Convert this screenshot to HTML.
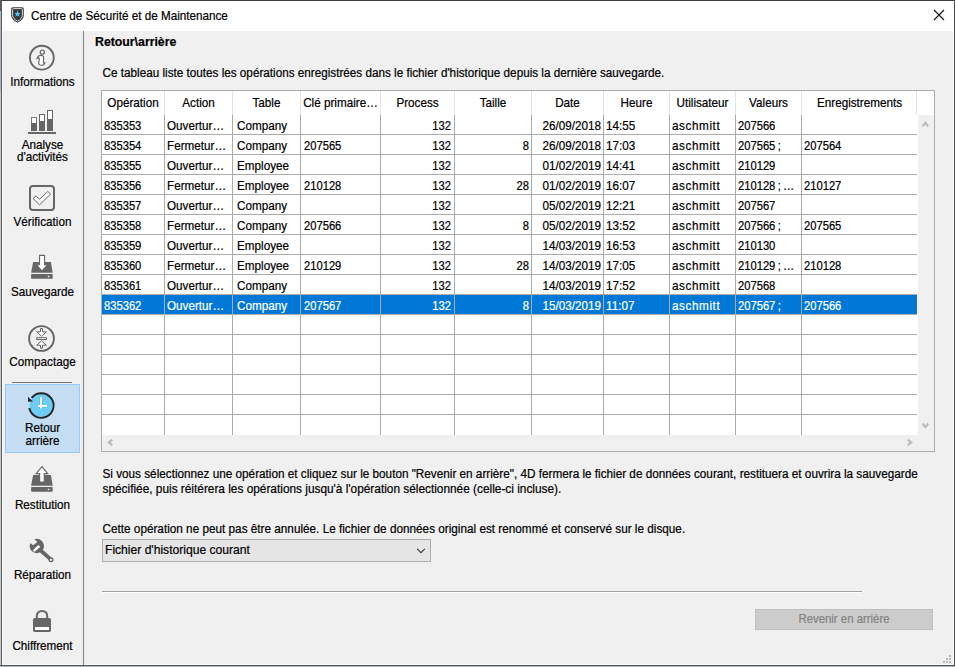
<!DOCTYPE html>
<html><head><meta charset="utf-8"><style>
html,body{margin:0;padding:0;}
body{width:955px;height:667px;position:relative;overflow:hidden;background:#f0f0f0;font-family:"Liberation Sans",sans-serif;}
.t{position:absolute;white-space:pre;-webkit-text-stroke:0.2px currentColor;transform:scaleY(1.08);}
.r{position:absolute;}
svg{position:absolute;}
</style></head><body>
<div class="r" style="left:0px;top:0px;width:1px;height:667px;background:#c3c6cb;"></div>
<div class="r" style="left:0px;top:11px;width:1px;height:80px;background:#a9b6c6;"></div>
<div class="r" style="left:0px;top:0px;width:1px;height:11px;background:#5a5a5a;"></div>
<div class="r" style="left:1px;top:0px;width:954px;height:1px;background:#3f3f3f;"></div>
<div class="r" style="left:1px;top:0px;width:1px;height:666px;background:#5d5d5d;"></div>
<div class="r" style="left:954px;top:0px;width:1px;height:666px;background:#4a4a4a;"></div>
<div class="r" style="left:0px;top:665px;width:955px;height:1px;background:#555;"></div>
<div class="r" style="left:0px;top:666px;width:955px;height:1px;background:#a9b6c6;"></div>
<div class="r" style="left:2px;top:1px;width:952px;height:30px;background:#fff;"></div>
<div class="r" style="left:2px;top:31px;width:1px;height:634px;background:#f9f9f9;"></div>
<div class="r" style="left:953px;top:31px;width:1px;height:634px;background:#fdfdfd;"></div>
<div class="r" style="left:2px;top:664px;width:952px;height:1px;background:#fdfdfd;"></div>
<svg style="left:10px;top:6px" width="16" height="18" viewBox="0 0 16 18">
<path d="M1.2 2.8 Q1.2 1.2 2.8 1.2 L12.2 1.2 Q13.8 1.2 13.8 2.8 L13.8 9.2 C13.8 12.6 11.2 14.8 7.5 16.8 C3.8 14.8 1.2 12.6 1.2 9.2Z" fill="#3a3a3a"/>
<path d="M2.6 3.4 Q2.6 2.6 3.4 2.6 L11.6 2.6 Q12.4 2.6 12.4 3.4 L12.4 9.1 C12.4 11.8 10.4 13.6 7.5 15.2 C4.6 13.6 2.6 11.8 2.6 9.1Z" fill="none" stroke="#e6e6e6" stroke-width="0.9"/>
<path d="M7.5 4.6 L8.4 6.9 L10.8 7 L8.9 8.5 L9.6 10.8 L7.5 9.5 L5.4 10.8 L6.1 8.5 L4.2 7 L6.6 6.9Z" fill="#4fc3f7"/>
</svg>
<div class="t" style="left:31px;top:8.95px;font-size:11.7px;line-height:14px;color:#000;transform-origin:0 11.05px;">Centre de Sécurité et de Maintenance</div>
<svg style="left:933px;top:9px" width="12" height="12" viewBox="0 0 12 12"><path d="M1 1 L11 11 M11 1 L1 11" stroke="#111" stroke-width="1.1"/></svg>
<div class="r" style="left:83px;top:31px;width:1px;height:634px;background:#828282;"></div>
<div class="t" style="left:3px;top:74.95px;font-size:11.7px;line-height:14px;color:#000;transform-origin:0 11.05px;width:79px;text-align:center;">Informations</div>
<div class="t" style="left:3px;top:137.95px;font-size:11.7px;line-height:14px;color:#000;transform-origin:0 11.05px;width:79px;text-align:center;">Analyse</div>
<div class="t" style="left:3px;top:149.95px;font-size:11.7px;line-height:14px;color:#000;transform-origin:0 11.05px;width:79px;text-align:center;">d'activités</div>
<div class="t" style="left:3px;top:214.95px;font-size:11.7px;line-height:14px;color:#000;transform-origin:0 11.05px;width:79px;text-align:center;">Vérification</div>
<div class="t" style="left:3px;top:284.95px;font-size:11.7px;line-height:14px;color:#000;transform-origin:0 11.05px;width:79px;text-align:center;">Sauvegarde</div>
<div class="t" style="left:3px;top:354.95px;font-size:11.7px;line-height:14px;color:#000;transform-origin:0 11.05px;width:79px;text-align:center;">Compactage</div>
<div class="r" style="left:12px;top:382px;width:60px;height:1px;background:#737373;"></div>
<div class="r" style="left:5px;top:384px;width:75px;height:69px;background:#c4ddf2;box-sizing:border-box;border:1px solid #97c9f6;"></div>
<div class="t" style="left:3px;top:420.95px;font-size:11.7px;line-height:14px;color:#000;transform-origin:0 11.05px;width:79px;text-align:center;">Retour</div>
<div class="t" style="left:3px;top:433.95px;font-size:11.7px;line-height:14px;color:#000;transform-origin:0 11.05px;width:79px;text-align:center;">arrière</div>
<div class="t" style="left:3px;top:497.95px;font-size:11.7px;line-height:14px;color:#000;transform-origin:0 11.05px;width:79px;text-align:center;">Restitution</div>
<div class="t" style="left:3px;top:567.95px;font-size:11.7px;line-height:14px;color:#000;transform-origin:0 11.05px;width:79px;text-align:center;">Réparation</div>
<div class="t" style="left:3px;top:638.95px;font-size:11.7px;line-height:14px;color:#000;transform-origin:0 11.05px;width:79px;text-align:center;">Chiffrement</div>
<svg style="left:27px;top:43px" width="30" height="30" viewBox="0 0 30 30">
<circle cx="14.85" cy="14.7" r="11.9" fill="none" stroke="#666" stroke-width="1.9"/>
<circle cx="15.3" cy="9.2" r="2.05" fill="#fff" stroke="#666" stroke-width="1.2"/>
<path d="M10.2 15.2 C11 13.2 12.5 12.3 14 12.4 C15.8 12.5 16.8 13.4 16.6 15.2 L16.4 19.3 C16.4 20.2 17.3 20.3 17.9 19.3 C17.8 21.5 15.8 22.5 13.8 22.3 C12 22.1 11.5 20.8 11.8 19.5 L12.3 15.6 C12.3 14.7 11.3 14.6 10.2 15.2Z" fill="#fff" stroke="#666" stroke-width="1.15"/>
</svg>
<svg style="left:26px;top:108px" width="32" height="28" viewBox="0 0 32 28">
<rect x="2" y="24" width="28" height="2" fill="#666"/>
<rect x="5.5" y="9.5" width="5" height="13" fill="#fff" stroke="#7a7a7a" stroke-width="1"/>
<rect x="5" y="15" width="6" height="8" fill="#666"/>
<rect x="13.5" y="6.5" width="5" height="16" fill="#fff" stroke="#666" stroke-width="1"/>
<rect x="13" y="13" width="6" height="10" fill="#666"/>
<rect x="21.5" y="2.5" width="5" height="20" fill="#fff" stroke="#666" stroke-width="1"/>
<rect x="21" y="11" width="6" height="12" fill="#666"/>
</svg>
<svg style="left:28px;top:184px" width="28" height="28" viewBox="0 0 28 28">
<rect x="2" y="2" width="24" height="24" rx="3" fill="none" stroke="#666" stroke-width="2"/>
<path d="M5 14.5 L8 11.8 L11.5 15.3 L19.8 7.5 L22.5 10.2 L11.5 20.8Z" fill="#fff" stroke="#666" stroke-width="1"/>
</svg>
<svg style="left:27px;top:250px" width="30" height="34" viewBox="0 0 30 34">
<path d="M6.1 12 L23.9 12 L25.7 22.7 L4.1 22.7Z" fill="#666"/>
<rect x="4.1" y="23.9" width="21.6" height="4.9" rx="0.8" fill="#666"/>
<path d="M20.9 25.5 L22.9 26.5 L20.9 27.5Z" fill="#fff"/>
<path d="M12.55 5.35 L17.55 5.35 L17.55 14.8 L20.4 14.8 L15 21.2 L9.6 14.8 L12.55 14.8Z" fill="#fff" stroke="#666" stroke-width="1.1"/>
</svg>
<svg style="left:26px;top:323px" width="32" height="32" viewBox="0 0 32 32">
<circle cx="15.5" cy="15.5" r="12.4" fill="none" stroke="#666" stroke-width="1.9"/>
<rect x="10.8" y="14.7" width="9.6" height="1.8" fill="#fff" stroke="#666" stroke-width="1"/>
<path d="M14.5 5.5 L16.5 5.5 L16.5 8.8 L20.3 8.8 L15.5 13.2 L10.7 8.8 L14.5 8.8Z" fill="#fff" stroke="#666" stroke-width="1"/>
<path d="M14.5 25.2 L16.5 25.2 L16.5 22.2 L20.3 22.2 L15.5 17.9 L10.7 22.2 L14.5 22.2Z" fill="#fff" stroke="#666" stroke-width="1"/>
</svg>
<svg style="left:25px;top:389px" width="34" height="34" viewBox="0 0 34 34">
<circle cx="16.3" cy="16.5" r="11.6" fill="#6dcdf5"/>
<path d="M4.27 19.06 A12.3 12.3 0 1 0 6.61 8.93" fill="none" stroke="#262626" stroke-width="1.9"/>
<path d="M3 7.8 L3 12.7 L8 12.6Z" fill="#262626"/>
<path d="M14.5 7.5 L17.5 7.5 L17.5 15.6 L22.4 15.6 L22.4 18.5 L17.5 18.5 L17.5 20 L14.5 20 L14.5 18.5 L12.6 18.5 L12.6 15.6 L14.5 15.6Z" fill="#55b9ea"/><path d="M15 8 L17 8 L17 16 L22 16 L22 18 L17 18 L17 19.6 L15 19.6 L15 18 L13 18 L13 16 L15 16Z" fill="#fff"/>
</svg>
<svg style="left:27px;top:462px" width="30" height="34" viewBox="0 0 30 34">
<path d="M6.1 13 L23.9 13 L25.7 23.7 L4.1 23.7Z" fill="#666"/>
<rect x="4.1" y="25" width="21.6" height="4.8" rx="0.8" fill="#666"/>
<path d="M20.9 26.5 L22.9 27.4 L20.9 28.3Z" fill="#fff"/>
<path d="M15 4.7 L20.7 11.6 L17.3 11.6 L17.3 20.1 L12.6 20.1 L12.6 11.6 L9.1 11.6Z" fill="#fff" stroke="#666" stroke-width="1.15"/>
</svg>
<svg style="left:26px;top:534px" width="32" height="32" viewBox="0 0 32 32">
<path d="M13 15 L25 25.6" stroke="#666" stroke-width="3.7" stroke-linecap="round"/>
<circle cx="25" cy="25.7" r="2.5" fill="#666"/>
<circle cx="10.8" cy="12" r="7.2" fill="#666"/>
<path d="M6.2 3.1 L11.3 7.9 L7.2 11.3 L2.1 7.4Z" fill="#f0f0f0"/>
<path d="M8.4 16.4 L12.6 12.5" stroke="#fff" stroke-width="2.5" stroke-linecap="round"/>
<circle cx="25" cy="25.8" r="1.1" fill="#fff"/>
</svg>
<svg style="left:31px;top:607px" width="22" height="27" viewBox="0 0 22 27">
<path d="M5.8 11 L5.8 9 C5.8 5.6 8 3.9 11 3.9 C14 3.9 16.2 5.6 16.2 9 L16.2 11" fill="none" stroke="#666" stroke-width="2"/>
<rect x="2" y="11" width="18" height="14" rx="1.8" fill="#666"/>
<rect x="4" y="20" width="14" height="3" fill="#fff"/>
</svg>
<div class="t" style="left:95px;top:34.74px;font-size:12.3px;line-height:14px;color:#000;transform-origin:0 11.26px;font-weight:bold;">Retour\arrière</div>
<div class="t" style="left:102.6px;top:65.94px;font-size:11.71px;line-height:14px;color:#000;transform-origin:0 11.06px;">Ce tableau liste toutes les opérations enregistrées dans le fichier d'historique depuis la dernière sauvegarde.</div>
<div class="r" style="left:101px;top:90px;width:834px;height:362px;background:#fff;box-sizing:border-box;border:1px solid #a9abb0;"></div>
<div class="t" style="left:102px;top:95.95px;font-size:11.7px;line-height:14px;color:#000;transform-origin:0 11.05px;width:62px;text-align:center;">Opération</div>
<div class="r" style="left:164px;top:91px;width:1px;height:24px;background:#e5e5e5;"></div>
<div class="t" style="left:165px;top:95.95px;font-size:11.7px;line-height:14px;color:#000;transform-origin:0 11.05px;width:67px;text-align:center;">Action</div>
<div class="r" style="left:232px;top:91px;width:1px;height:24px;background:#e5e5e5;"></div>
<div class="t" style="left:233px;top:95.95px;font-size:11.7px;line-height:14px;color:#000;transform-origin:0 11.05px;width:67px;text-align:center;">Table</div>
<div class="r" style="left:300px;top:91px;width:1px;height:24px;background:#e5e5e5;"></div>
<div class="t" style="left:301px;top:95.95px;font-size:11.7px;line-height:14px;color:#000;transform-origin:0 11.05px;width:79px;text-align:center;">Clé primaire…</div>
<div class="r" style="left:380px;top:91px;width:1px;height:24px;background:#e5e5e5;"></div>
<div class="t" style="left:381px;top:95.95px;font-size:11.7px;line-height:14px;color:#000;transform-origin:0 11.05px;width:73px;text-align:center;">Process</div>
<div class="r" style="left:454px;top:91px;width:1px;height:24px;background:#e5e5e5;"></div>
<div class="t" style="left:455px;top:95.95px;font-size:11.7px;line-height:14px;color:#000;transform-origin:0 11.05px;width:76px;text-align:center;">Taille</div>
<div class="r" style="left:531px;top:91px;width:1px;height:24px;background:#e5e5e5;"></div>
<div class="t" style="left:532px;top:95.95px;font-size:11.7px;line-height:14px;color:#000;transform-origin:0 11.05px;width:71px;text-align:center;">Date</div>
<div class="r" style="left:603px;top:91px;width:1px;height:24px;background:#e5e5e5;"></div>
<div class="t" style="left:604px;top:95.95px;font-size:11.7px;line-height:14px;color:#000;transform-origin:0 11.05px;width:65px;text-align:center;">Heure</div>
<div class="r" style="left:669px;top:91px;width:1px;height:24px;background:#e5e5e5;"></div>
<div class="t" style="left:670px;top:95.95px;font-size:11.7px;line-height:14px;color:#000;transform-origin:0 11.05px;width:65px;text-align:center;">Utilisateur</div>
<div class="r" style="left:735px;top:91px;width:1px;height:24px;background:#e5e5e5;"></div>
<div class="t" style="left:736px;top:95.95px;font-size:11.7px;line-height:14px;color:#000;transform-origin:0 11.05px;width:65px;text-align:center;">Valeurs</div>
<div class="r" style="left:801px;top:91px;width:1px;height:24px;background:#e5e5e5;"></div>
<div class="t" style="left:802px;top:95.95px;font-size:11.7px;line-height:14px;color:#000;transform-origin:0 11.05px;width:115px;text-align:center;">Enregistrements</div>
<div class="r" style="left:916px;top:91px;width:1px;height:24px;background:#e5e5e5;"></div>
<div class="r" style="left:918px;top:115px;width:16px;height:336px;background:#f0f0f0;"></div>
<div class="r" style="left:102px;top:435px;width:816px;height:16px;background:#f0f0f0;"></div>
<div class="r" style="left:102px;top:134px;width:815px;height:1px;background:#ababab;"></div>
<div class="r" style="left:102px;top:154px;width:815px;height:1px;background:#ababab;"></div>
<div class="r" style="left:102px;top:174px;width:815px;height:1px;background:#ababab;"></div>
<div class="r" style="left:102px;top:194px;width:815px;height:1px;background:#ababab;"></div>
<div class="r" style="left:102px;top:214px;width:815px;height:1px;background:#ababab;"></div>
<div class="r" style="left:102px;top:234px;width:815px;height:1px;background:#ababab;"></div>
<div class="r" style="left:102px;top:254px;width:815px;height:1px;background:#ababab;"></div>
<div class="r" style="left:102px;top:274px;width:815px;height:1px;background:#ababab;"></div>
<div class="r" style="left:102px;top:294px;width:815px;height:1px;background:#ababab;"></div>
<div class="r" style="left:102px;top:314px;width:815px;height:1px;background:#ababab;"></div>
<div class="r" style="left:102px;top:334px;width:815px;height:1px;background:#ababab;"></div>
<div class="r" style="left:102px;top:354px;width:815px;height:1px;background:#ababab;"></div>
<div class="r" style="left:102px;top:374px;width:815px;height:1px;background:#ababab;"></div>
<div class="r" style="left:102px;top:394px;width:815px;height:1px;background:#ababab;"></div>
<div class="r" style="left:102px;top:414px;width:815px;height:1px;background:#ababab;"></div>
<div class="r" style="left:164px;top:115px;width:1px;height:320px;background:#ababab;"></div>
<div class="r" style="left:232px;top:115px;width:1px;height:320px;background:#ababab;"></div>
<div class="r" style="left:300px;top:115px;width:1px;height:320px;background:#ababab;"></div>
<div class="r" style="left:380px;top:115px;width:1px;height:320px;background:#ababab;"></div>
<div class="r" style="left:454px;top:115px;width:1px;height:320px;background:#ababab;"></div>
<div class="r" style="left:531px;top:115px;width:1px;height:320px;background:#ababab;"></div>
<div class="r" style="left:603px;top:115px;width:1px;height:320px;background:#ababab;"></div>
<div class="r" style="left:669px;top:115px;width:1px;height:320px;background:#ababab;"></div>
<div class="r" style="left:735px;top:115px;width:1px;height:320px;background:#ababab;"></div>
<div class="r" style="left:801px;top:115px;width:1px;height:320px;background:#ababab;"></div>
<div class="t" style="left:104px;top:119.12px;font-size:11.2px;line-height:14px;color:#000;transform-origin:0 10.88px;">835353</div>
<div class="t" style="left:167px;top:118.95px;font-size:11.7px;line-height:14px;color:#000;transform-origin:0 11.05px;">Ouvertur…</div>
<div class="t" style="left:237px;top:118.95px;font-size:11.7px;line-height:14px;color:#000;transform-origin:0 11.05px;">Company</div>
<div class="t" style="left:380px;top:119.12px;font-size:11.2px;line-height:14px;color:#000;transform-origin:0 10.88px;width:71px;text-align:right;">132</div>
<div class="t" style="left:531px;top:118.95px;font-size:11.7px;line-height:14px;color:#000;transform-origin:0 11.05px;width:70px;text-align:right;">26/09/2018</div>
<div class="t" style="left:606px;top:118.95px;font-size:11.7px;line-height:14px;color:#000;transform-origin:0 11.05px;">14:55</div>
<div class="t" style="left:672px;top:118.95px;font-size:11.7px;line-height:14px;color:#000;transform-origin:0 11.05px;letter-spacing:0.6px;">aschmitt</div>
<div class="t" style="left:738px;top:119.12px;font-size:11.2px;line-height:14px;color:#000;transform-origin:0 10.88px;">207566</div>
<div class="t" style="left:104px;top:139.12px;font-size:11.2px;line-height:14px;color:#000;transform-origin:0 10.88px;">835354</div>
<div class="t" style="left:167px;top:138.95px;font-size:11.7px;line-height:14px;color:#000;transform-origin:0 11.05px;">Fermetur…</div>
<div class="t" style="left:237px;top:138.95px;font-size:11.7px;line-height:14px;color:#000;transform-origin:0 11.05px;">Company</div>
<div class="t" style="left:304px;top:139.12px;font-size:11.2px;line-height:14px;color:#000;transform-origin:0 10.88px;">207565</div>
<div class="t" style="left:380px;top:139.12px;font-size:11.2px;line-height:14px;color:#000;transform-origin:0 10.88px;width:71px;text-align:right;">132</div>
<div class="t" style="left:454px;top:139.12px;font-size:11.2px;line-height:14px;color:#000;transform-origin:0 10.88px;width:75px;text-align:right;">8</div>
<div class="t" style="left:531px;top:138.95px;font-size:11.7px;line-height:14px;color:#000;transform-origin:0 11.05px;width:70px;text-align:right;">26/09/2018</div>
<div class="t" style="left:606px;top:138.95px;font-size:11.7px;line-height:14px;color:#000;transform-origin:0 11.05px;">17:03</div>
<div class="t" style="left:672px;top:138.95px;font-size:11.7px;line-height:14px;color:#000;transform-origin:0 11.05px;letter-spacing:0.6px;">aschmitt</div>
<div class="t" style="left:738px;top:139.12px;font-size:11.2px;line-height:14px;color:#000;transform-origin:0 10.88px;word-spacing:-0.8px;">207565 ;</div>
<div class="t" style="left:804px;top:139.12px;font-size:11.2px;line-height:14px;color:#000;transform-origin:0 10.88px;">207564</div>
<div class="t" style="left:104px;top:159.12px;font-size:11.2px;line-height:14px;color:#000;transform-origin:0 10.88px;">835355</div>
<div class="t" style="left:167px;top:158.95px;font-size:11.7px;line-height:14px;color:#000;transform-origin:0 11.05px;">Ouvertur…</div>
<div class="t" style="left:237px;top:158.95px;font-size:11.7px;line-height:14px;color:#000;transform-origin:0 11.05px;">Employee</div>
<div class="t" style="left:380px;top:159.12px;font-size:11.2px;line-height:14px;color:#000;transform-origin:0 10.88px;width:71px;text-align:right;">132</div>
<div class="t" style="left:531px;top:158.95px;font-size:11.7px;line-height:14px;color:#000;transform-origin:0 11.05px;width:70px;text-align:right;">01/02/2019</div>
<div class="t" style="left:606px;top:158.95px;font-size:11.7px;line-height:14px;color:#000;transform-origin:0 11.05px;">14:41</div>
<div class="t" style="left:672px;top:158.95px;font-size:11.7px;line-height:14px;color:#000;transform-origin:0 11.05px;letter-spacing:0.6px;">aschmitt</div>
<div class="t" style="left:738px;top:159.12px;font-size:11.2px;line-height:14px;color:#000;transform-origin:0 10.88px;">210129</div>
<div class="t" style="left:104px;top:179.12px;font-size:11.2px;line-height:14px;color:#000;transform-origin:0 10.88px;">835356</div>
<div class="t" style="left:167px;top:178.95px;font-size:11.7px;line-height:14px;color:#000;transform-origin:0 11.05px;">Fermetur…</div>
<div class="t" style="left:237px;top:178.95px;font-size:11.7px;line-height:14px;color:#000;transform-origin:0 11.05px;">Employee</div>
<div class="t" style="left:304px;top:179.12px;font-size:11.2px;line-height:14px;color:#000;transform-origin:0 10.88px;">210128</div>
<div class="t" style="left:380px;top:179.12px;font-size:11.2px;line-height:14px;color:#000;transform-origin:0 10.88px;width:71px;text-align:right;">132</div>
<div class="t" style="left:454px;top:179.12px;font-size:11.2px;line-height:14px;color:#000;transform-origin:0 10.88px;width:75px;text-align:right;">28</div>
<div class="t" style="left:531px;top:178.95px;font-size:11.7px;line-height:14px;color:#000;transform-origin:0 11.05px;width:70px;text-align:right;">01/02/2019</div>
<div class="t" style="left:606px;top:178.95px;font-size:11.7px;line-height:14px;color:#000;transform-origin:0 11.05px;">16:07</div>
<div class="t" style="left:672px;top:178.95px;font-size:11.7px;line-height:14px;color:#000;transform-origin:0 11.05px;letter-spacing:0.6px;">aschmitt</div>
<div class="t" style="left:738px;top:179.12px;font-size:11.2px;line-height:14px;color:#000;transform-origin:0 10.88px;word-spacing:-0.8px;">210128 ; …</div>
<div class="t" style="left:804px;top:179.12px;font-size:11.2px;line-height:14px;color:#000;transform-origin:0 10.88px;">210127</div>
<div class="t" style="left:104px;top:199.12px;font-size:11.2px;line-height:14px;color:#000;transform-origin:0 10.88px;">835357</div>
<div class="t" style="left:167px;top:198.95px;font-size:11.7px;line-height:14px;color:#000;transform-origin:0 11.05px;">Ouvertur…</div>
<div class="t" style="left:237px;top:198.95px;font-size:11.7px;line-height:14px;color:#000;transform-origin:0 11.05px;">Company</div>
<div class="t" style="left:380px;top:199.12px;font-size:11.2px;line-height:14px;color:#000;transform-origin:0 10.88px;width:71px;text-align:right;">132</div>
<div class="t" style="left:531px;top:198.95px;font-size:11.7px;line-height:14px;color:#000;transform-origin:0 11.05px;width:70px;text-align:right;">05/02/2019</div>
<div class="t" style="left:606px;top:198.95px;font-size:11.7px;line-height:14px;color:#000;transform-origin:0 11.05px;">12:21</div>
<div class="t" style="left:672px;top:198.95px;font-size:11.7px;line-height:14px;color:#000;transform-origin:0 11.05px;letter-spacing:0.6px;">aschmitt</div>
<div class="t" style="left:738px;top:199.12px;font-size:11.2px;line-height:14px;color:#000;transform-origin:0 10.88px;">207567</div>
<div class="t" style="left:104px;top:219.12px;font-size:11.2px;line-height:14px;color:#000;transform-origin:0 10.88px;">835358</div>
<div class="t" style="left:167px;top:218.95px;font-size:11.7px;line-height:14px;color:#000;transform-origin:0 11.05px;">Fermetur…</div>
<div class="t" style="left:237px;top:218.95px;font-size:11.7px;line-height:14px;color:#000;transform-origin:0 11.05px;">Company</div>
<div class="t" style="left:304px;top:219.12px;font-size:11.2px;line-height:14px;color:#000;transform-origin:0 10.88px;">207566</div>
<div class="t" style="left:380px;top:219.12px;font-size:11.2px;line-height:14px;color:#000;transform-origin:0 10.88px;width:71px;text-align:right;">132</div>
<div class="t" style="left:454px;top:219.12px;font-size:11.2px;line-height:14px;color:#000;transform-origin:0 10.88px;width:75px;text-align:right;">8</div>
<div class="t" style="left:531px;top:218.95px;font-size:11.7px;line-height:14px;color:#000;transform-origin:0 11.05px;width:70px;text-align:right;">05/02/2019</div>
<div class="t" style="left:606px;top:218.95px;font-size:11.7px;line-height:14px;color:#000;transform-origin:0 11.05px;">13:52</div>
<div class="t" style="left:672px;top:218.95px;font-size:11.7px;line-height:14px;color:#000;transform-origin:0 11.05px;letter-spacing:0.6px;">aschmitt</div>
<div class="t" style="left:738px;top:219.12px;font-size:11.2px;line-height:14px;color:#000;transform-origin:0 10.88px;word-spacing:-0.8px;">207566 ;</div>
<div class="t" style="left:804px;top:219.12px;font-size:11.2px;line-height:14px;color:#000;transform-origin:0 10.88px;">207565</div>
<div class="t" style="left:104px;top:239.12px;font-size:11.2px;line-height:14px;color:#000;transform-origin:0 10.88px;">835359</div>
<div class="t" style="left:167px;top:238.95px;font-size:11.7px;line-height:14px;color:#000;transform-origin:0 11.05px;">Ouvertur…</div>
<div class="t" style="left:237px;top:238.95px;font-size:11.7px;line-height:14px;color:#000;transform-origin:0 11.05px;">Employee</div>
<div class="t" style="left:380px;top:239.12px;font-size:11.2px;line-height:14px;color:#000;transform-origin:0 10.88px;width:71px;text-align:right;">132</div>
<div class="t" style="left:531px;top:238.95px;font-size:11.7px;line-height:14px;color:#000;transform-origin:0 11.05px;width:70px;text-align:right;">14/03/2019</div>
<div class="t" style="left:606px;top:238.95px;font-size:11.7px;line-height:14px;color:#000;transform-origin:0 11.05px;">16:53</div>
<div class="t" style="left:672px;top:238.95px;font-size:11.7px;line-height:14px;color:#000;transform-origin:0 11.05px;letter-spacing:0.6px;">aschmitt</div>
<div class="t" style="left:738px;top:239.12px;font-size:11.2px;line-height:14px;color:#000;transform-origin:0 10.88px;">210130</div>
<div class="t" style="left:104px;top:259.12px;font-size:11.2px;line-height:14px;color:#000;transform-origin:0 10.88px;">835360</div>
<div class="t" style="left:167px;top:258.95px;font-size:11.7px;line-height:14px;color:#000;transform-origin:0 11.05px;">Fermetur…</div>
<div class="t" style="left:237px;top:258.95px;font-size:11.7px;line-height:14px;color:#000;transform-origin:0 11.05px;">Employee</div>
<div class="t" style="left:304px;top:259.12px;font-size:11.2px;line-height:14px;color:#000;transform-origin:0 10.88px;">210129</div>
<div class="t" style="left:380px;top:259.12px;font-size:11.2px;line-height:14px;color:#000;transform-origin:0 10.88px;width:71px;text-align:right;">132</div>
<div class="t" style="left:454px;top:259.12px;font-size:11.2px;line-height:14px;color:#000;transform-origin:0 10.88px;width:75px;text-align:right;">28</div>
<div class="t" style="left:531px;top:258.95px;font-size:11.7px;line-height:14px;color:#000;transform-origin:0 11.05px;width:70px;text-align:right;">14/03/2019</div>
<div class="t" style="left:606px;top:258.95px;font-size:11.7px;line-height:14px;color:#000;transform-origin:0 11.05px;">17:05</div>
<div class="t" style="left:672px;top:258.95px;font-size:11.7px;line-height:14px;color:#000;transform-origin:0 11.05px;letter-spacing:0.6px;">aschmitt</div>
<div class="t" style="left:738px;top:259.12px;font-size:11.2px;line-height:14px;color:#000;transform-origin:0 10.88px;word-spacing:-0.8px;">210129 ; …</div>
<div class="t" style="left:804px;top:259.12px;font-size:11.2px;line-height:14px;color:#000;transform-origin:0 10.88px;">210128</div>
<div class="t" style="left:104px;top:279.12px;font-size:11.2px;line-height:14px;color:#000;transform-origin:0 10.88px;">835361</div>
<div class="t" style="left:167px;top:278.95px;font-size:11.7px;line-height:14px;color:#000;transform-origin:0 11.05px;">Ouvertur…</div>
<div class="t" style="left:237px;top:278.95px;font-size:11.7px;line-height:14px;color:#000;transform-origin:0 11.05px;">Company</div>
<div class="t" style="left:380px;top:279.12px;font-size:11.2px;line-height:14px;color:#000;transform-origin:0 10.88px;width:71px;text-align:right;">132</div>
<div class="t" style="left:531px;top:278.95px;font-size:11.7px;line-height:14px;color:#000;transform-origin:0 11.05px;width:70px;text-align:right;">14/03/2019</div>
<div class="t" style="left:606px;top:278.95px;font-size:11.7px;line-height:14px;color:#000;transform-origin:0 11.05px;">17:52</div>
<div class="t" style="left:672px;top:278.95px;font-size:11.7px;line-height:14px;color:#000;transform-origin:0 11.05px;letter-spacing:0.6px;">aschmitt</div>
<div class="t" style="left:738px;top:279.12px;font-size:11.2px;line-height:14px;color:#000;transform-origin:0 10.88px;">207568</div>
<div class="r" style="left:102px;top:295px;width:62px;height:19px;background:#0078d7;"></div>
<div class="r" style="left:165px;top:295px;width:67px;height:19px;background:#0078d7;"></div>
<div class="r" style="left:233px;top:295px;width:67px;height:19px;background:#0078d7;"></div>
<div class="r" style="left:301px;top:295px;width:79px;height:19px;background:#0078d7;"></div>
<div class="r" style="left:381px;top:295px;width:73px;height:19px;background:#0078d7;"></div>
<div class="r" style="left:455px;top:295px;width:76px;height:19px;background:#0078d7;"></div>
<div class="r" style="left:532px;top:295px;width:71px;height:19px;background:#0078d7;"></div>
<div class="r" style="left:604px;top:295px;width:65px;height:19px;background:#0078d7;"></div>
<div class="r" style="left:670px;top:295px;width:65px;height:19px;background:#0078d7;"></div>
<div class="r" style="left:736px;top:295px;width:65px;height:19px;background:#0078d7;"></div>
<div class="r" style="left:802px;top:295px;width:115px;height:19px;background:#0078d7;"></div>
<div class="t" style="left:104px;top:299.12px;font-size:11.2px;line-height:14px;color:#fff;transform-origin:0 10.88px;">835362</div>
<div class="t" style="left:167px;top:298.95px;font-size:11.7px;line-height:14px;color:#fff;transform-origin:0 11.05px;">Ouvertur…</div>
<div class="t" style="left:237px;top:298.95px;font-size:11.7px;line-height:14px;color:#fff;transform-origin:0 11.05px;">Company</div>
<div class="t" style="left:304px;top:299.12px;font-size:11.2px;line-height:14px;color:#fff;transform-origin:0 10.88px;">207567</div>
<div class="t" style="left:380px;top:299.12px;font-size:11.2px;line-height:14px;color:#fff;transform-origin:0 10.88px;width:71px;text-align:right;">132</div>
<div class="t" style="left:454px;top:299.12px;font-size:11.2px;line-height:14px;color:#fff;transform-origin:0 10.88px;width:75px;text-align:right;">8</div>
<div class="t" style="left:531px;top:298.95px;font-size:11.7px;line-height:14px;color:#fff;transform-origin:0 11.05px;width:70px;text-align:right;">15/03/2019</div>
<div class="t" style="left:606px;top:298.95px;font-size:11.7px;line-height:14px;color:#fff;transform-origin:0 11.05px;">11:07</div>
<div class="t" style="left:672px;top:298.95px;font-size:11.7px;line-height:14px;color:#fff;transform-origin:0 11.05px;letter-spacing:0.6px;">aschmitt</div>
<div class="t" style="left:738px;top:299.12px;font-size:11.2px;line-height:14px;color:#fff;transform-origin:0 10.88px;word-spacing:-0.8px;">207567 ;</div>
<div class="t" style="left:804px;top:299.12px;font-size:11.2px;line-height:14px;color:#fff;transform-origin:0 10.88px;">207566</div>
<svg style="left:0;top:0" width="955" height="667" viewBox="0 0 955 667">
<g fill="none" stroke="#bababa" stroke-width="2.1" stroke-linejoin="miter">
<path d="M922.6 126.3 L925.4 122.7 L928.2 126.3"/>
<path d="M922.6 423.5 L925.4 427.1 L928.2 423.5"/>
<path d="M112.3 439.6 L108.7 442.4 L112.3 445.2"/>
<path d="M907.7 439.6 L911.3 442.4 L907.7 445.2"/>
</g></svg>
<div class="t" style="left:102.5px;top:466.93px;font-size:11.745px;line-height:14px;color:#000;transform-origin:0 11.07px;">Si vous sélectionnez une opération et cliquez sur le bouton "Revenir en arrière", 4D fermera le fichier de données courant, restituera et ouvrira la sauvegarde</div>
<div class="t" style="left:102.5px;top:482.39px;font-size:11.85px;line-height:14px;color:#000;transform-origin:0 11.11px;">spécifiée, puis réitérera les opérations jusqu'à l'opération sélectionnée (celle-ci incluse).</div>
<div class="t" style="left:102.5px;top:521.93px;font-size:11.76px;line-height:14px;color:#000;transform-origin:0 11.07px;">Cette opération ne peut pas être annulée. Le fichier de données original est renommé et conservé sur le disque.</div>
<div class="r" style="left:102px;top:539px;width:329px;height:23px;background:#e5e5e5;box-sizing:border-box;border:1px solid #adadad;"></div>
<div class="t" style="left:105px;top:542.51px;font-size:12.1px;line-height:14px;color:#000;transform-origin:0 11.19px;">Fichier d'historique courant</div>
<svg style="left:414px;top:545px" width="12" height="9" viewBox="0 0 12 9"><path d="M3.2 3.9 L7 7.6 L10.8 3.9" fill="none" stroke="#3a3a3a" stroke-width="1.15"/></svg>
<div class="r" style="left:102px;top:591px;width:760px;height:1px;background:#a0a0a0;"></div>
<div class="r" style="left:102px;top:592px;width:760px;height:1px;background:#fff;"></div>
<div class="r" style="left:755px;top:609px;width:178px;height:21px;background:#cccccc;box-sizing:border-box;border:1px solid #bfbfbf;"></div>
<div class="t" style="left:755px;top:612.05px;font-size:11.4px;line-height:14px;color:#838383;transform-origin:0 10.95px;width:178px;text-align:center;">Revenir en arrière</div>
<div class="r" style="left:949px;top:655px;width:2px;height:2px;background:#b8b8b8;"></div>
<div class="r" style="left:946px;top:658px;width:2px;height:2px;background:#b8b8b8;"></div>
<div class="r" style="left:949px;top:658px;width:2px;height:2px;background:#b8b8b8;"></div>
<div class="r" style="left:943px;top:661px;width:2px;height:2px;background:#b8b8b8;"></div>
<div class="r" style="left:946px;top:661px;width:2px;height:2px;background:#b8b8b8;"></div>
<div class="r" style="left:949px;top:661px;width:2px;height:2px;background:#b8b8b8;"></div>
</body></html>
